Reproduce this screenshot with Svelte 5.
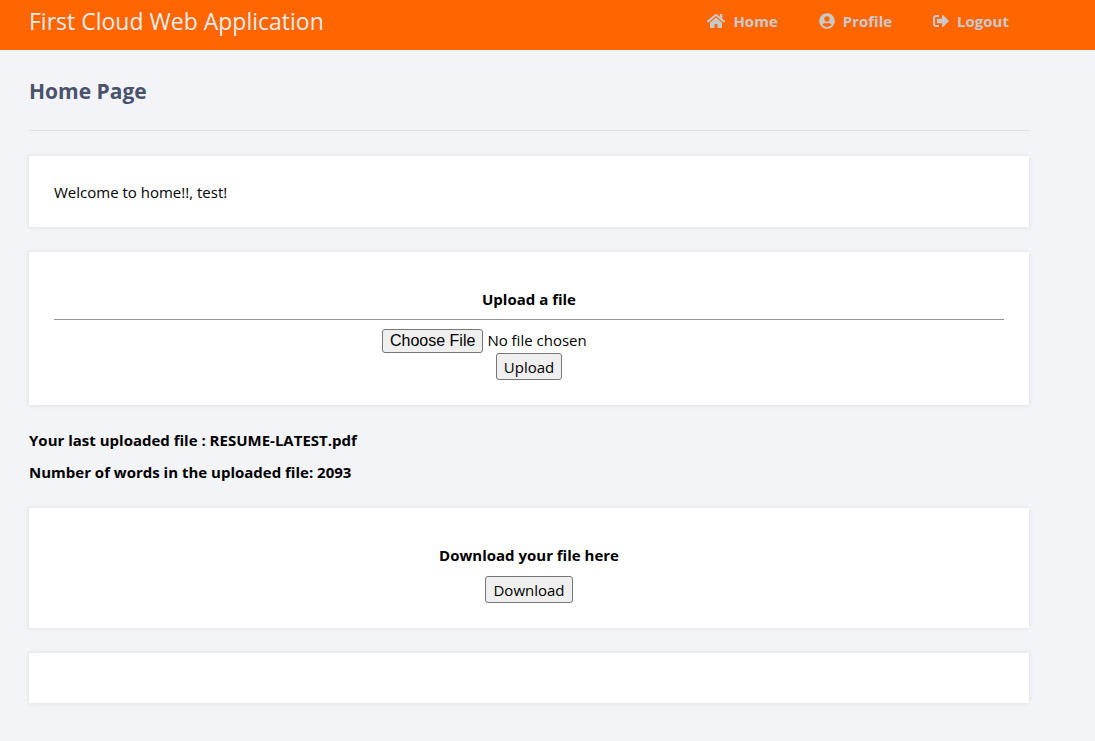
<script>
  const links = [
    {
      label: 'Home',
      width: 18,
      box: '0 0 576 512',
      path: 'M280.37 148.26L96 300.11V464a16 16 0 0 0 16 16l112.06-.29a16 16 0 0 0 15.92-16V368a16 16 0 0 1 16-16h64a16 16 0 0 1 16 16v95.64a16 16 0 0 0 16 16.05L464 480a16 16 0 0 0 16-16V300L295.67 148.26a12.19 12.19 0 0 0-15.3 0zM571.6 251.47L488 182.56V44.05a12 12 0 0 0-12-12h-56a12 12 0 0 0-12 12v72.61L318.47 43a48 48 0 0 0-61 0L4.34 251.47a12 12 0 0 0-1.6 16.9l25.5 31A12 12 0 0 0 45.15 301l235.22-193.74a12.19 12.19 0 0 1 15.3 0L530.9 301a12 12 0 0 0 16.9-1.6l25.5-31a12 12 0 0 0-1.7-16.93z'
    },
    {
      label: 'Profile',
      width: 16,
      box: '0 0 496 512',
      path: 'M248 8C111 8 0 119 0 256s111 248 248 248 248-111 248-248S385 8 248 8zm0 96c48.6 0 88 39.4 88 88s-39.4 88-88 88-88-39.4-88-88 39.4-88 88-88zm0 344c-58.7 0-111.3-26.6-146.5-68.2 18.8-35.4 55.6-59.8 98.5-59.8 2.4 0 4.8.4 7.1 1.1 13 4.2 26.6 6.9 40.9 6.9 14.3 0 28-2.7 40.9-6.9 2.3-.7 4.7-1.1 7.1-1.1 42.9 0 79.7 24.4 98.5 59.8C359.3 421.4 306.7 448 248 448z'
    },
    {
      label: 'Logout',
      width: 16,
      box: '0 0 512 512',
      path: 'M497 273L329 441c-15 15-41 4.5-41-17v-96H152c-13.3 0-24-10.7-24-24v-96c0-13.3 10.7-24 24-24h136V88c0-21.4 25.9-32 41-17l168 168c9.3 9.4 9.3 24.6 0 34zM192 436v-40c0-6.6-5.4-12-12-12H96c-17.7 0-32-14.3-32-32V160c0-17.7 14.3-32 32-32h84c6.6 0 12-5.4 12-12V76c0-6.6-5.4-12-12-12H96c-53 0-96 43-96 96v192c0 53 43 96 96 96h84c6.6 0 12-5.4 12-12z'
    }
  ];
</script>

<header>
  <div class="bar">
    <h1>First Cloud Web Application</h1>
    <nav>
      {#each links as link}
        <a href="#{link.label.toLowerCase()}">
          <svg width={link.width} height="16" viewBox={link.box} aria-hidden="true"><path d={link.path} /></svg>
          {link.label}
        </a>
      {/each}
    </nav>
  </div>
</header>

<main>
  <h2>Home Page</h2>
  <p class="card welcome">Welcome to home!!, test!</p>

  <form class="card panel" onsubmit={(e) => e.preventDefault()}>
    <label class="title" for="file">Upload a file</label>
    <hr />
    <input id="file" type="file" />
    <button type="submit">Upload</button>
  </form>

  <div class="facts">
    <p>Your last uploaded file : RESUME-LATEST.pdf</p>
    <p>Number of words in the uploaded file: 2093</p>
  </div>

  <section class="card panel">
    <h3 class="title">Download your file here</h3>
    <button type="button">Download</button>
  </section>

  <div class="card"></div>
</main>

<style>
  :global(body) {
    margin: 0;
    background: #f3f4f7;
    color: #000;
    font-family: "Open Sans", "Noto Sans", sans-serif;
    font-size: 15px;
    line-height: 22px;
  }
  h1, h2, h3, p {
    margin: 0;
  }
  header {
    background: #ff6600;
  }
  .bar, main {
    box-sizing: border-box;
    max-width: 1066px;
    padding: 0 37px 0 29px;
  }
  main {
    display: flex;
    flex-direction: column;
  }
  .bar {
    display: flex;
    align-items: center;
    justify-content: space-between;
    padding-bottom: 8px;
    min-height: 50px;
  }
  h1 {
    color: #eaebed;
    font-size: 23px;
    font-weight: 400;
    line-height: 32px;
  }
  nav {
    display: flex;
    gap: 41px;
    padding-right: 20px;
  }
  nav a {
    display: flex;
    align-items: center;
    gap: 8px;
    color: #c9c9cb;
    font-weight: 700;
    text-decoration: none;
  }
  nav svg {
    fill: currentColor;
  }
  h2 {
    padding: 26px 0 24px;
    border-bottom: 1px solid #e0e0e3;
    color: #4a536e;
    font-size: 21px;
    font-weight: 700;
    line-height: 30px;
  }
  .card {
    margin: 25px 0 0;
    padding: 25px;
    background: #fff;
    box-shadow: 0 0 5px rgba(0, 0, 0, 0.1);
  }
  .welcome {
    padding-bottom: 24px;
  }
  .card:last-child {
    margin-bottom: 25px;
  }
  .panel {
    display: flex;
    flex-direction: column;
    align-items: center;
    padding-top: 36px;
  }
  .title {
    font-size: 15px;
    font-weight: 700;
  }
  hr {
    align-self: stretch;
    margin: 9px 0;
    border: 0;
    border-top: 1px solid #949494;
  }
  input, button {
    font: inherit;
  }
  input {
    width: 294px;
    height: 24px;
  }
  input::file-selector-button {
    height: 24px;
    padding: 1px 7px;
    font-family: "Liberation Sans", Arial, sans-serif;
    font-size: 16px;
  }
  button, input::file-selector-button {
    border: 1px solid #767676;
    border-radius: 3px;
    background: #efefef;
    color: #000;
  }
  button {
    height: 27px;
    padding: 1px 7px;
  }
  .facts {
    display: grid;
    gap: 10px;
    padding-top: 24px;
    font-weight: 700;
  }
  .title + button {
    margin-top: 10px;
  }
</style>
